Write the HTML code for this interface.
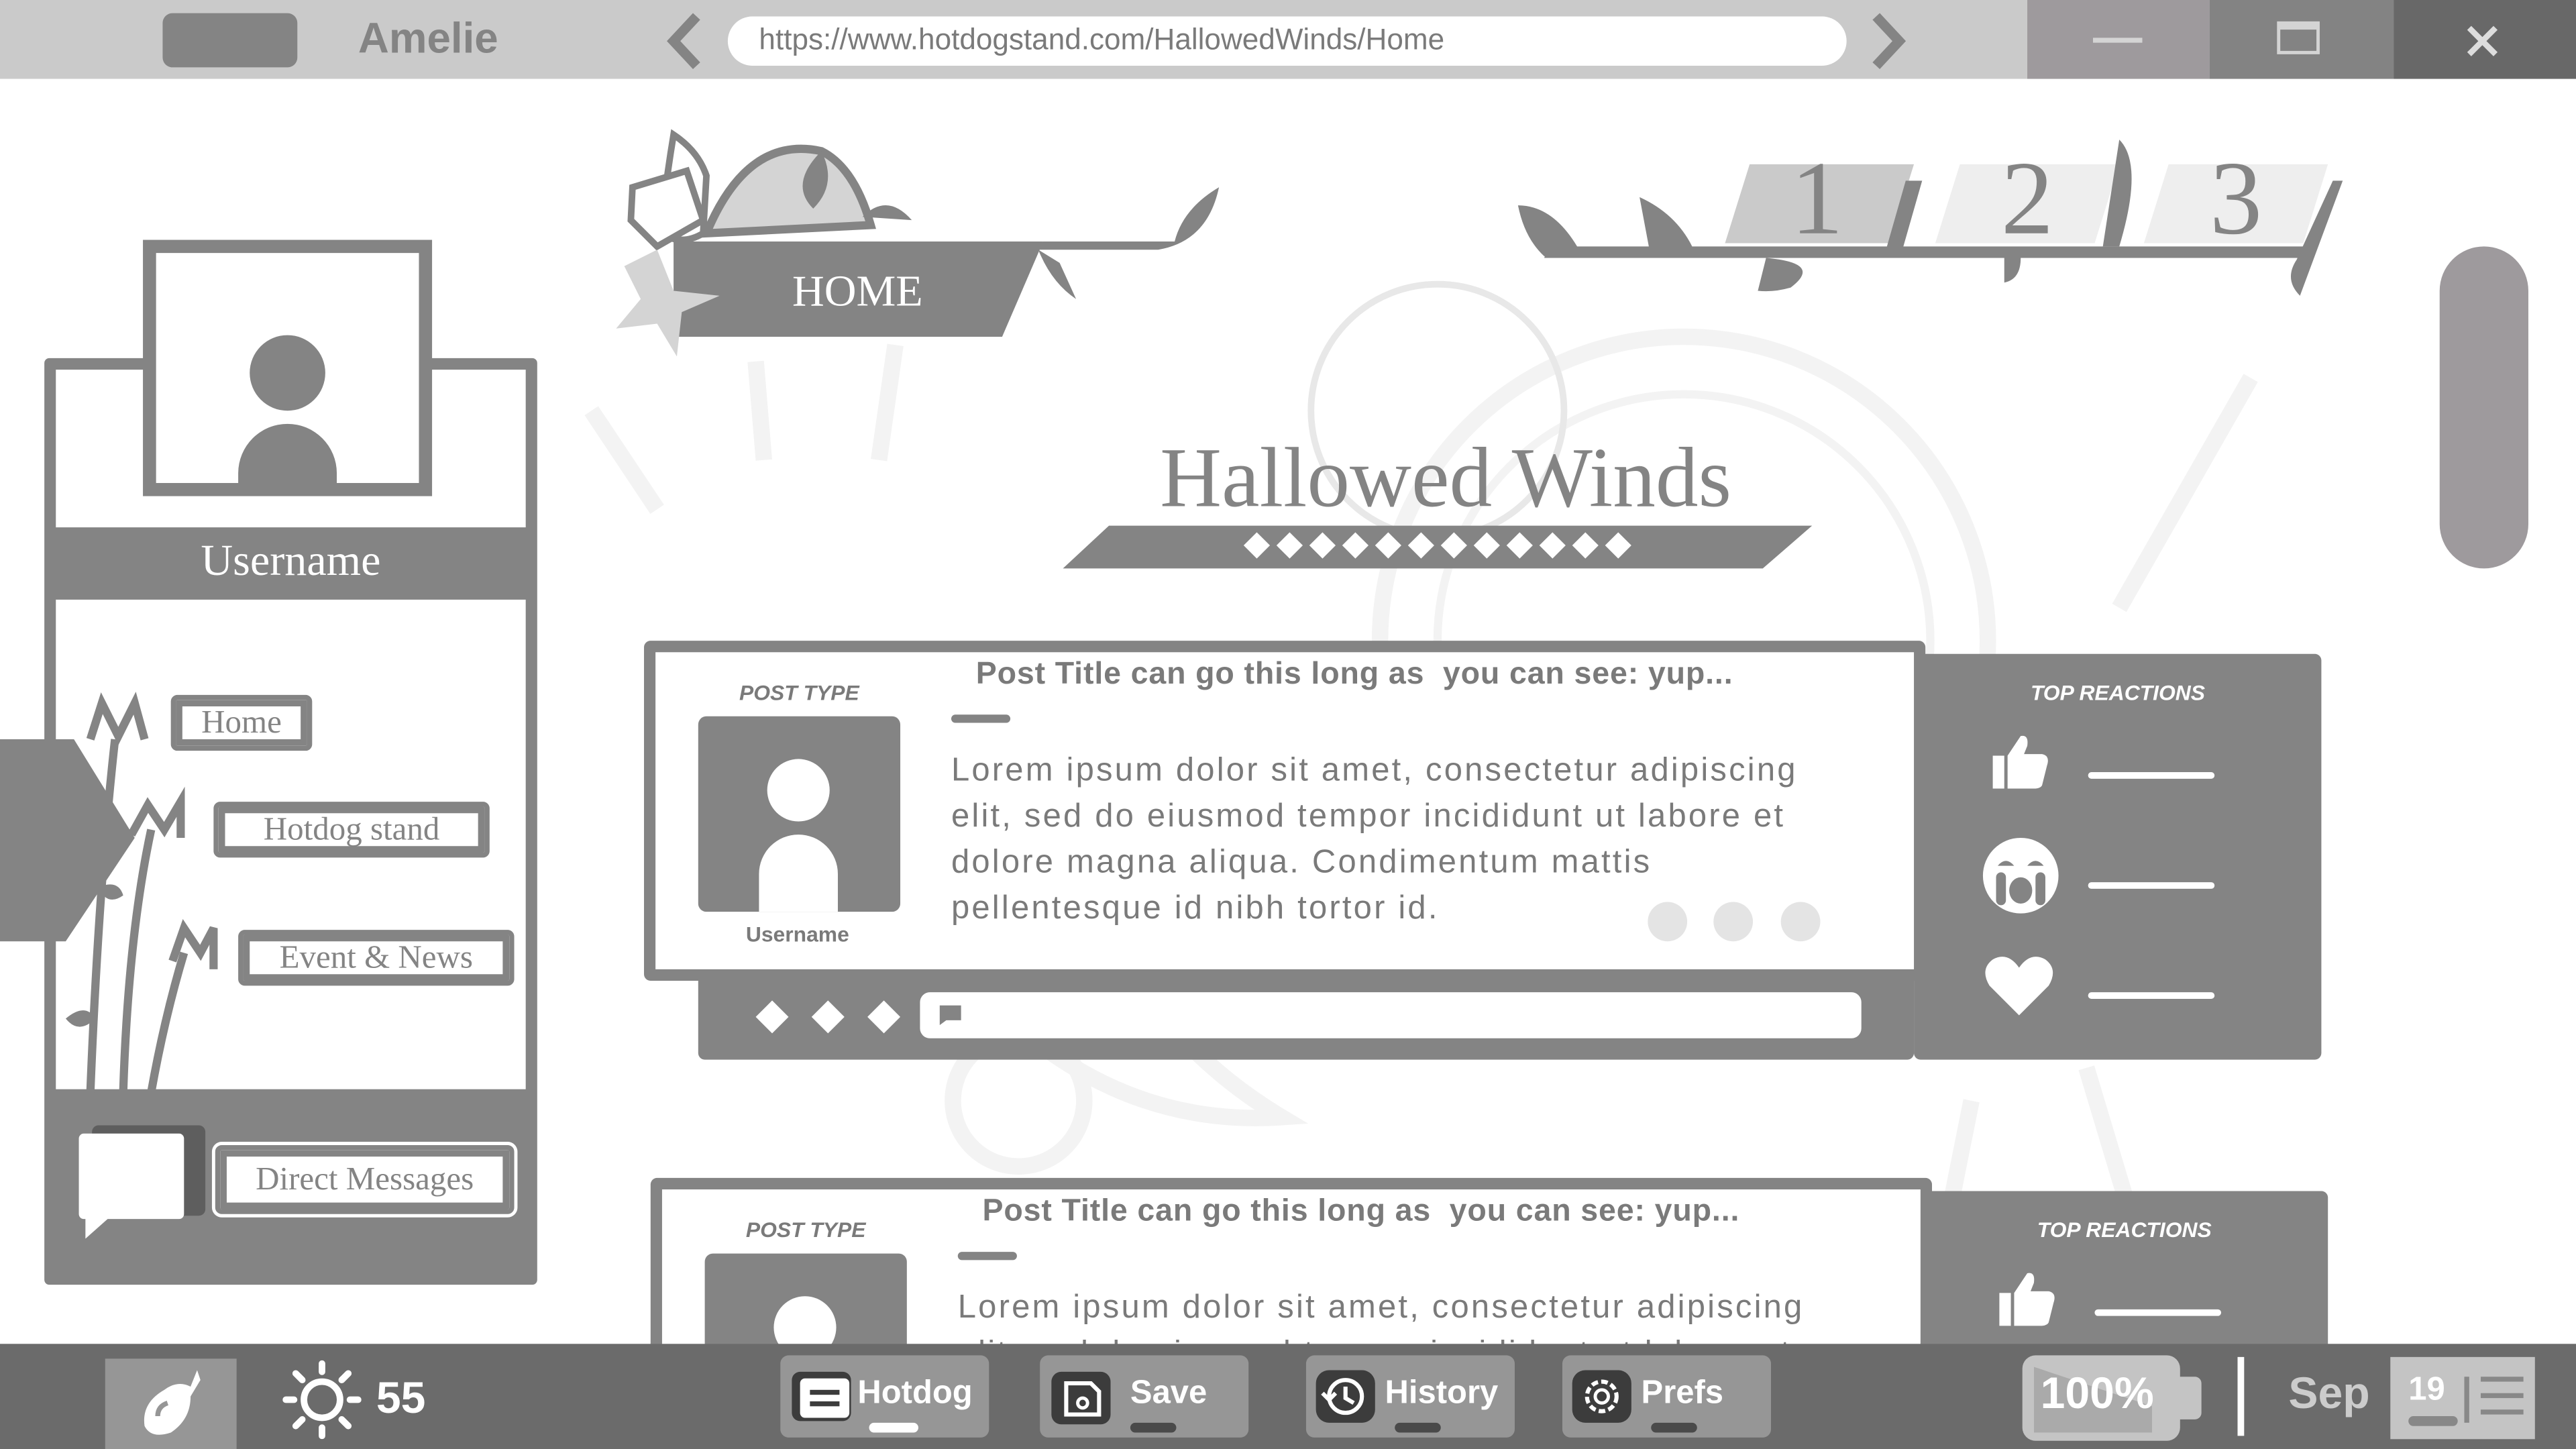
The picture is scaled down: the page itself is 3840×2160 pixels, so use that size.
<!DOCTYPE html>
<html><head><meta charset="utf-8"><style>
html,body{margin:0;padding:0;overflow:hidden;background:#fff}
#w{position:absolute;left:0;top:0;width:1568px;height:882px;transform:scale(2.44898);transform-origin:0 0;background:#fff;font-family:"Liberation Sans",sans-serif;overflow:hidden}
.a{position:absolute}
.serif{font-family:"Liberation Serif",serif}
.btn{position:absolute;border:3px solid #848484;border-radius:4px;background:#fff;color:#848484;font-family:"Liberation Serif",serif;font-size:20px;text-align:center;box-shadow:0 0 0 2px #fff,0 0 0 4px #848484 inset}
.lorem{font-size:20px;color:#7a7a7a;line-height:28px;letter-spacing:1.3px}
.ptitle{font-weight:bold;font-size:19px;color:#7a7a7a;letter-spacing:.35px}
.bb{position:absolute;top:825px;height:50px;background:#969696;border-radius:5px;color:#fff;font-weight:bold;font-size:20px}
</style></head><body><div id="w">
<div class="a" style="left:0;top:0;width:1568px;height:48px;background:#cacaca"></div>
<div class="a" style="left:99px;top:8px;width:82px;height:33px;border-radius:6px;background:#848484"></div>
<div class="a" style="left:218px;top:8px;font-size:26px;font-weight:bold;color:#848484">Amelie</div>
<svg class="a" style="left:400px;top:6px" width="36" height="38"><path d="M24 4 L10 19 L24 34" stroke="#848484" stroke-width="6" fill="none"/></svg>
<div class="a" style="left:443px;top:10px;width:681px;height:30px;border-radius:15px;background:#fff"></div>
<div class="a" style="left:462px;top:14px;font-size:18px;color:#7a7a7a">https://www.hotdogstand.com/HallowedWinds/Home</div>
<svg class="a" style="left:1132px;top:6px" width="36" height="38"><path d="M10 4 L24 19 L10 34" stroke="#848484" stroke-width="6" fill="none"/></svg>
<div class="a" style="left:1234px;top:0;width:111px;height:48px;background:#9e9a9d"></div>
<div class="a" style="left:1274px;top:23px;width:30px;height:3px;background:#d4d4d4"></div>
<div class="a" style="left:1345px;top:0;width:112px;height:48px;background:#838383"></div>
<div class="a" style="left:1386px;top:13px;width:26px;height:20px;border:2px solid #d4d4d4;box-sizing:border-box;border-top-width:5px"></div>
<div class="a" style="left:1457px;top:0;width:111px;height:48px;background:#686868"></div>
<svg class="a" style="left:1500px;top:14px" width="22" height="22"><path d="M3 3L19 19M19 3L3 19" stroke="#ddd" stroke-width="3.5"/></svg>

<svg class="a" style="left:300px;top:170px" width="1150" height="650">
<g stroke="#f3f3f3" stroke-width="10" fill="none">
<circle cx="725" cy="220" r="185"/>
<circle cx="725" cy="220" r="150" stroke-width="5"/>
<path d="M230 340 Q330 520 480 510 Q380 450 350 330"/>
<circle cx="320" cy="500" r="40"/>
<path d="M60 80 L100 140 M160 50 L165 110 M245 40 L235 110"/>
<path d="M1070 60 L990 200 M970 480 L1000 580 M900 500 L880 600"/>
</g>
<circle cx="575" cy="80" r="77" fill="none" stroke="#e8e8e8" stroke-width="4"/>
</svg>

<svg class="a" style="left:370px;top:72px" width="380" height="145">
<path d="M60 70 Q85 10 130 20 Q150 30 160 65 Z" fill="#d4d4d4" stroke="#848484" stroke-width="5"/>
<path d="M130 20 Q110 40 125 55 Q140 40 130 20Z M155 60 Q170 45 185 62Z" fill="#848484"/>
<path d="M40 75 L265 75 L240 133 L40 133 Z" fill="#848484"/>
<path d="M265 75 L345 75 Q350 55 372 42 Q365 75 335 80 L262 80 Z" fill="#848484"/>
<path d="M262 80 Q270 100 285 110 L275 88Z" fill="#848484"/>
<path d="M40 10 Q55 20 60 35 L58 70 Q45 78 32 70 Q35 40 40 10Z" fill="#fff" stroke="#848484" stroke-width="4"/>
<path d="M15 42 L48 32 L58 62 L30 78 L14 62Z" fill="#fff" stroke="#848484" stroke-width="4"/>
<path d="M30 80 L40 105 L68 108 L45 118 L42 145 L30 125 L5 128 L20 110 L10 90 Z" fill="#d4d4d4"/>
<text x="152" y="114" font-family="Liberation Serif" font-size="27" fill="#fff" text-anchor="middle">HOME</text>
</svg>

<svg class="a" style="left:920px;top:80px" width="510" height="110">
<path d="M22 70 L490 70 L488 77 L20 77Z" fill="#848484"/>
<path d="M4 45 Q25 45 40 70 L20 76 Q8 65 4 45Z M78 40 Q100 50 110 70 L84 72Z" fill="#848484"/>
<path d="M145 20 L245 20 L230 68 L130 68Z" fill="#cacaca"/>
<path d="M273 20 L370 20 L355 68 L258 68Z" fill="#eeeeee"/>
<path d="M400 20 L497 20 L482 68 L385 68Z" fill="#eeeeee"/>
<path d="M240 30 L250 30 L238 72 L228 72Z M370 5 Q385 20 370 70 L360 70Z M500 30 L506 30 L480 100 Q470 90 478 78Z" fill="#848484"/>
<path d="M155 77 Q190 80 170 95 Q160 98 150 97Z M300 77 L310 77 Q310 90 300 92Z" fill="#848484"/>
<text x="186" y="62" font-family="Liberation Serif" font-size="64" fill="#848484" text-anchor="middle">1</text>
<text x="314" y="62" font-family="Liberation Serif" font-size="64" fill="#848484" text-anchor="middle">2</text>
<text x="441" y="62" font-family="Liberation Serif" font-size="64" fill="#848484" text-anchor="middle">3</text>
</svg>

<div class="a serif" style="left:640px;top:262px;width:480px;text-align:center;font-size:52px;color:#848484">Hallowed Winds</div>
<svg class="a" style="left:645px;top:318px" width="460" height="30">
<path d="M30 2 L458 2 L428 28 L2 28Z" fill="#848484"/>
<g fill="#fff">
<path d="M120 6l8 8-8 8-8-8z"/><path d="M140 6l8 8-8 8-8-8z"/><path d="M160 6l8 8-8 8-8-8z"/><path d="M180 6l8 8-8 8-8-8z"/><path d="M200 6l8 8-8 8-8-8z"/><path d="M220 6l8 8-8 8-8-8z"/><path d="M240 6l8 8-8 8-8-8z"/><path d="M260 6l8 8-8 8-8-8z"/><path d="M280 6l8 8-8 8-8-8z"/><path d="M300 6l8 8-8 8-8-8z"/><path d="M320 6l8 8-8 8-8-8z"/><path d="M340 6l8 8-8 8-8-8z"/>
</g></svg>

<div class="a" style="left:1485px;top:150px;width:54px;height:196px;border-radius:27px;background:#9e9a9d"></div>

<div class="a" style="left:27px;top:218px;width:300px;height:564px;background:#848484;border-radius:3px"></div>
<div class="a" style="left:34px;top:225px;width:286px;height:96px;background:#fff"></div>
<div class="a" style="left:34px;top:365px;width:286px;height:298px;background:#fff"></div>
<div class="a" style="left:87px;top:146px;width:176px;height:156px;background:#848484"></div>
<div class="a" style="left:95px;top:154px;width:160px;height:140px;background:#fff;overflow:hidden">
<div class="a" style="left:57px;top:50px;width:46px;height:46px;border-radius:50%;background:#848484"></div>
<div class="a" style="left:50px;top:104px;width:60px;height:60px;border-radius:30px 30px 0 0;background:#848484"></div>
</div>
<div class="a serif" style="left:34px;top:326px;width:286px;text-align:center;font-size:27px;color:#fff">Username</div>
<div class="btn" style="left:104px;top:423px;width:80px;height:28px;line-height:28px">Home</div>
<div class="btn" style="left:130px;top:488px;width:162px;height:28px;line-height:28px">Hotdog stand</div>
<div class="btn" style="left:145px;top:566px;width:162px;height:28px;line-height:28px">Event &amp; News</div>
<svg class="a" style="left:0;top:420px" width="140" height="245">
<path d="M0 30 L45 30 L82 90 L40 153 L0 153Z" fill="#848484"/>
<g stroke="#848484" stroke-width="5" fill="none">
<path d="M55 245 Q60 120 70 30"/><path d="M75 245 Q78 150 92 85"/><path d="M92 245 Q100 200 112 160"/>
<path d="M55 30 L62 8 L72 28 L82 8 L88 30"/><path d="M80 88 L90 70 L100 85 L110 68 L110 90"/><path d="M105 165 L112 145 L122 160 L130 145 L130 170"/>
</g>
<path d="M40 200 Q52 190 58 200 Q48 210 40 200Z M60 120 Q72 115 75 125 Q65 132 60 120Z" fill="#848484"/>
</svg>
<div class="a" style="left:56px;top:685px;width:69px;height:55px;background:#5e5e5e;border-radius:4px"></div>
<div class="a" style="left:48px;top:690px;width:64px;height:52px;background:#fff;border-radius:3px"></div>
<svg class="a" style="left:48px;top:738px" width="30" height="20"><path d="M4 0 L22 0 L4 16Z" fill="#fff"/></svg>
<div class="btn" style="left:131px;top:697px;width:176px;height:36px;line-height:36px">Direct Messages</div>

<div class="a" style="left:425px;top:580px;width:740px;height:65px;background:#848484;border-radius:4px"></div>
<div class="a" style="left:1165px;top:398px;width:248px;height:247px;background:#848484;border-radius:4px"></div>
<div class="a" style="left:392px;top:390px;width:780px;height:207px;background:#848484;border-radius:4px"></div>
<div class="a" style="left:399px;top:397px;width:766px;height:193px;background:#fff"></div>
<div class="a" style="left:450px;top:414px;font-size:13px;font-weight:bold;font-style:italic;color:#7a7a7a">POST TYPE</div>
<div class="a" style="left:425px;top:436px;width:123px;height:119px;background:#848484;border-radius:5px;overflow:hidden">
<div class="a" style="left:42px;top:26px;width:38px;height:38px;border-radius:50%;background:#fff"></div>
<div class="a" style="left:37px;top:72px;width:48px;height:60px;border-radius:24px 24px 0 0;background:#fff"></div></div>
<div class="a" style="left:454px;top:561px;font-size:13px;font-weight:bold;color:#7a7a7a">Username</div>
<div class="a ptitle" style="left:594px;top:400px">Post Title can go this long as &nbsp;you can see: yup...</div>
<div class="a" style="left:579px;top:435px;width:36px;height:5px;border-radius:3px;background:#848484"></div>
<div class="a lorem" style="left:579px;top:455px;width:548px">Lorem ipsum dolor sit amet, consectetur adipiscing elit, sed do eiusmod tempor incididunt ut labore et dolore magna aliqua. Condimentum mattis pellentesque id nibh tortor id.</div>
<div class="a" style="left:1003px;top:549px;width:24px;height:24px;border-radius:50%;background:#e4e4e4"></div>
<div class="a" style="left:1043px;top:549px;width:24px;height:24px;border-radius:50%;background:#e4e4e4"></div>
<div class="a" style="left:1084px;top:549px;width:24px;height:24px;border-radius:50%;background:#e4e4e4"></div>
<svg class="a" style="left:458px;top:608px" width="95" height="22"><g fill="#fff"><path d="M12 1l10 10-10 10-10-10z"/><path d="M46 1l10 10-10 10-10-10z"/><path d="M80 1l10 10-10 10-10-10z"/></g></svg>
<div class="a" style="left:560px;top:604px;width:573px;height:28px;background:#fff;border-radius:6px"></div>
<svg class="a" style="left:571px;top:611px" width="16" height="14"><path d="M1 1h13v9H5l-4 3z" fill="#848484"/></svg>
<div class="a" style="left:1236px;top:414px;font-size:13px;font-weight:bold;font-style:italic;color:#fff">TOP REACTIONS</div>
<svg class="a" style="left:1210px;top:444px" width="40" height="40"><path d="M3 16h7v20H3z M12 16 L20 4 Q25 3 24 10 L22 15 H33 Q38 16 36 22 L33 34 Q32 36 28 36 H12Z" fill="#fff"/></svg>
<div class="a" style="left:1271px;top:470px;width:77px;height:4px;background:#fff;border-radius:2px"></div>
<svg class="a" style="left:1206px;top:509px" width="48" height="48"><circle cx="24" cy="24" r="23" fill="#fff"/><g fill="#848484"><path d="M10 18 Q15 12 20 18Z M28 18 Q33 12 38 18Z"/><ellipse cx="24" cy="33" rx="7" ry="8"/><rect x="9" y="22" width="6" height="20" rx="3"/><rect x="33" y="22" width="6" height="20" rx="3"/></g></svg>
<div class="a" style="left:1271px;top:537px;width:77px;height:4px;background:#fff;border-radius:2px"></div>
<svg class="a" style="left:1207px;top:580px" width="44" height="40"><path d="M22 38 L4 20 Q-2 10 6 4 Q15 -1 22 9 Q29 -1 38 4 Q46 10 40 20Z" fill="#fff"/></svg>
<div class="a" style="left:1271px;top:604px;width:77px;height:4px;background:#fff;border-radius:2px"></div>

<div class="a" style="left:1169px;top:725px;width:248px;height:120px;background:#848484;border-radius:4px"></div>
<div class="a" style="left:396px;top:717px;width:780px;height:120px;background:#848484;border-radius:4px"></div>
<div class="a" style="left:403px;top:724px;width:766px;height:110px;background:#fff"></div>
<div class="a" style="left:454px;top:741px;font-size:13px;font-weight:bold;font-style:italic;color:#7a7a7a">POST TYPE</div>
<div class="a" style="left:429px;top:763px;width:123px;height:80px;background:#848484;border-radius:5px;overflow:hidden">
<div class="a" style="left:42px;top:26px;width:38px;height:38px;border-radius:50%;background:#fff"></div></div>
<div class="a ptitle" style="left:598px;top:727px">Post Title can go this long as &nbsp;you can see: yup...</div>
<div class="a" style="left:583px;top:762px;width:36px;height:5px;border-radius:3px;background:#848484"></div>
<div class="a lorem" style="left:583px;top:782px;width:548px">Lorem ipsum dolor sit amet, consectetur adipiscing elit, sed do eiusmod tempor incididunt ut labore et</div>
<div class="a" style="left:1240px;top:741px;font-size:13px;font-weight:bold;font-style:italic;color:#fff">TOP REACTIONS</div>
<svg class="a" style="left:1214px;top:771px" width="40" height="40"><path d="M3 16h7v20H3z M12 16 L20 4 Q25 3 24 10 L22 15 H33 Q38 16 36 22 L33 34 Q32 36 28 36 H12Z" fill="#fff"/></svg>
<div class="a" style="left:1275px;top:797px;width:77px;height:4px;background:#fff;border-radius:2px"></div>

<div class="a" style="left:0;top:818px;width:1568px;height:64px;background:#6b6b6b"></div>
<div class="a" style="left:64px;top:827px;width:80px;height:55px;background:#969696"></div>
<svg class="a" style="left:78px;top:832px" width="50" height="46"><path d="M42 2 L38 12 Q30 8 22 14 Q8 22 10 36 Q14 44 26 40 Q38 32 38 18 L44 8Z" fill="#fff"/><path d="M18 30 Q18 24 24 22" stroke="#969696" stroke-width="3" fill="none"/></svg>
<svg class="a" style="left:172px;top:828px" width="48" height="48"><circle cx="24" cy="24" r="11" fill="none" stroke="#fff" stroke-width="4"/><g stroke="#fff" stroke-width="4" stroke-linecap="round"><path d="M24 2v5M24 41v5M2 24h5M41 24h5M8 8l4 4M36 36l4 4M40 8l-4 4M12 36l-4 4"/></g></svg>
<div class="a" style="left:229px;top:836px;font-size:27px;font-weight:bold;color:#fff">55</div>
<div class="bb" style="left:475px;width:127px"></div>
<svg class="a" style="left:480px;top:833px" width="40" height="34"><rect x="2" y="2" width="36" height="30" rx="5" fill="#3c3c3c"/><rect x="7" y="6" width="30" height="24" rx="3" fill="#fff"/><g fill="#3c3c3c"><rect x="13" y="13" width="18" height="3"/><rect x="13" y="20" width="18" height="3"/></g></svg>
<div class="a" style="left:522px;top:837px;font-size:20px;font-weight:bold;color:#fff">Hotdog</div>
<div class="a" style="left:529px;top:866px;width:30px;height:6px;border-radius:3px;background:#fff"></div>
<div class="bb" style="left:633px;width:127px"></div>
<svg class="a" style="left:638px;top:833px" width="40" height="36"><rect x="2" y="2" width="36" height="32" rx="6" fill="#3c3c3c"/><path d="M11 9h15l5 5v14H11z" fill="none" stroke="#fff" stroke-width="2.5"/><circle cx="21" cy="21" r="3" fill="none" stroke="#fff" stroke-width="2"/></svg>
<div class="a" style="left:688px;top:837px;font-size:20px;font-weight:bold;color:#fff">Save</div>
<div class="a" style="left:688px;top:866px;width:28px;height:6px;border-radius:3px;background:#4a4a4a"></div>
<div class="bb" style="left:795px;width:127px"></div>
<svg class="a" style="left:799px;top:832px" width="40" height="36"><rect x="2" y="2" width="36" height="32" rx="8" fill="#3c3c3c"/><circle cx="20" cy="18" r="10" fill="none" stroke="#fff" stroke-width="2.5"/><path d="M20 12v7l5 3M6 16l4 4 4-4" stroke="#fff" stroke-width="2.5" fill="none"/></svg>
<div class="a" style="left:843px;top:837px;font-size:20px;font-weight:bold;color:#fff">History</div>
<div class="a" style="left:849px;top:866px;width:28px;height:6px;border-radius:3px;background:#4a4a4a"></div>
<div class="bb" style="left:951px;width:127px"></div>
<svg class="a" style="left:955px;top:832px" width="40" height="36"><rect x="2" y="2" width="36" height="32" rx="8" fill="#3c3c3c"/><circle cx="20" cy="18" r="9" fill="none" stroke="#fff" stroke-width="2.5" stroke-dasharray="4 2"/><circle cx="20" cy="18" r="4" fill="none" stroke="#fff" stroke-width="2"/></svg>
<div class="a" style="left:999px;top:837px;font-size:20px;font-weight:bold;color:#fff">Prefs</div>
<div class="a" style="left:1005px;top:866px;width:28px;height:6px;border-radius:3px;background:#4a4a4a"></div>
<div class="a" style="left:1231px;top:825px;width:96px;height:52px;border-radius:8px;background:#c4c4c4"></div>
<div class="a" style="left:1322px;top:838px;width:18px;height:26px;border-radius:4px;background:#c4c4c4"></div>
<div class="a" style="left:1238px;top:832px;width:72px;height:40px;background:#aaa;clip-path:polygon(0 0,100% 60%,100% 100%,0 100%)"></div>
<div class="a" style="left:1242px;top:833px;font-size:27px;font-weight:bold;color:#fff">100%</div>
<div class="a" style="left:1362px;top:826px;width:4px;height:48px;background:#fff"></div>
<div class="a" style="left:1393px;top:833px;font-size:27px;font-weight:bold;color:#ccc">Sep</div>
<div class="a" style="left:1455px;top:826px;width:88px;height:50px;background:#c4c4c4"></div>
<div class="a" style="left:1466px;top:835px;font-size:20px;font-weight:bold;color:#fff">19</div>
<div class="a" style="left:1466px;top:862px;width:30px;height:6px;border-radius:3px;background:#888"></div>
<div class="a" style="left:1500px;top:838px;width:3px;height:28px;background:#888"></div>
<div class="a" style="left:1510px;top:838px;width:26px;height:3px;background:#888;box-shadow:0 10px 0 #888,0 20px 0 #888"></div>
</div></body></html>
